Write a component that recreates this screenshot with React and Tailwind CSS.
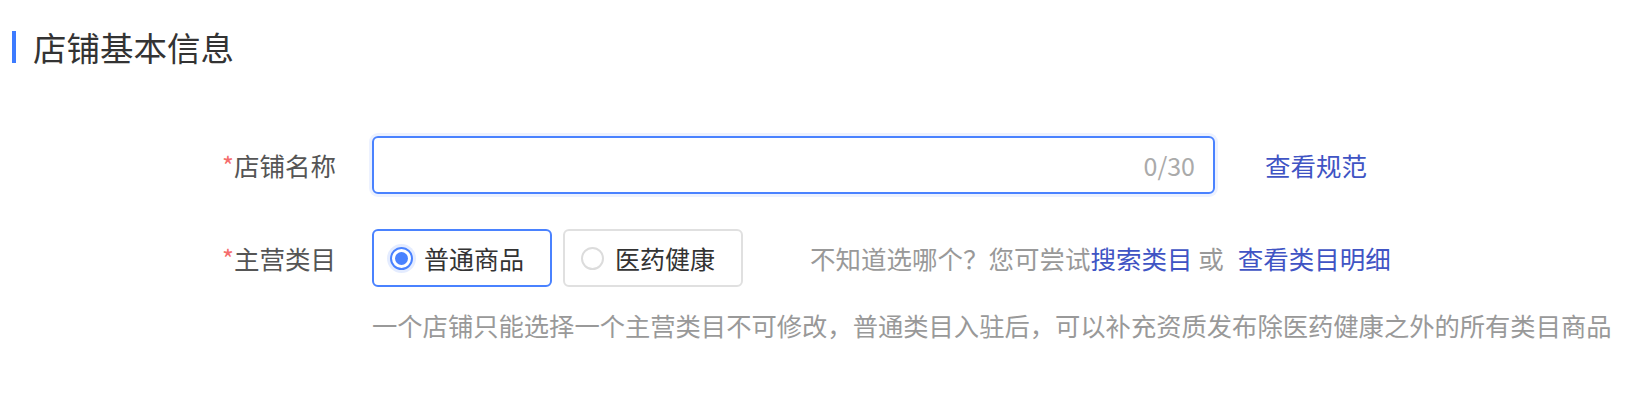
import React from "react";

const FONT = { fontFamily: '"Noto Sans CJK SC", "Noto Sans", sans-serif' };

function Radio({ checked, label }) {
  return (
    <div
      className={
        "flex h-[58px] w-[180px] items-center rounded-[6px] border-2 pl-[16px] " +
        (checked ? "border-[#4a82ff]" : "border-[#e0e0e0]")
      }
    >
      {checked ? (
        <span className="flex h-[23px] w-[23px] items-center justify-center rounded-full border-2 border-[#4a82ff] shadow-[0_0_0_3px_rgba(74,130,255,0.15)]">
          <span className="h-[13px] w-[13px] rounded-full bg-[#4a82ff]" />
        </span>
      ) : (
        <span className="h-[23px] w-[23px] rounded-full border-2 border-[#dcdcdc]" />
      )}
      <span className="ml-[11px] text-[25px] leading-[26px] text-[#333]">{label}</span>
    </div>
  );
}

function Label({ children }) {
  return (
    <div className="w-[336px] shrink-0 text-right text-[25.5px] leading-[26px] text-[#555]">
      <span className="text-[#f56c6c]">*</span>
      {children}
    </div>
  );
}

export default function App() {
  return (
    <div className="h-[416px] w-[1646px] overflow-hidden bg-white" style={FONT}>
      <div className="mt-[31px] flex h-[32px] items-center pl-[12px]">
        <div className="h-[32px] w-[4px] bg-[#3d7bff]" />
        <div className="ml-[17px] text-[33.5px] leading-[32px] text-[#333]">店铺基本信息</div>
      </div>

      <div className="mt-[73px] flex items-center">
        <Label>店铺名称</Label>
        <div className="ml-[36px] flex h-[58px] w-[843px] items-center justify-end rounded-[6px] border-2 border-[#4a82ff] pr-[18px] shadow-[0_0_0_3px_rgba(74,130,255,0.1)]">
          <span className="text-[25px] leading-[26px] text-[#aaa]">0/30</span>
        </div>
        <span className="ml-[50px] text-[25.5px] leading-[26px] text-[#4054c4]">查看规范</span>
      </div>

      <div className="mt-[35px] flex items-center">
        <Label>主营类目</Label>
        <div className="ml-[36px] flex gap-[11px]">
          <Radio checked label="普通商品" />
          <Radio label="医药健康" />
        </div>
        <div className="ml-[67px] text-[25.5px] leading-[26px] text-[#999]">
          不知道选哪个？您可尝试<span className="text-[#4054c4]">搜索类目</span> 或
          <span className="ml-[14px] text-[#4054c4]">查看类目明细</span>
        </div>
      </div>

      <div className="mt-[25px] pl-[372px] text-[25.3px] leading-[26px] text-[#999]">
        一个店铺只能选择一个主营类目不可修改，普通类目入驻后，可以补充资质发布除医药健康之外的所有类目商品
      </div>
    </div>
  );
}
